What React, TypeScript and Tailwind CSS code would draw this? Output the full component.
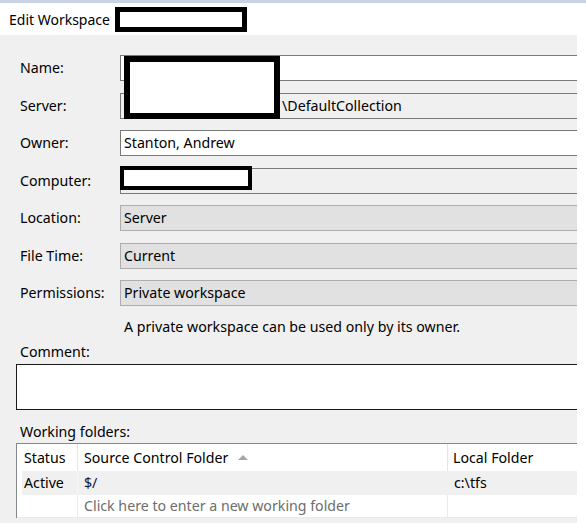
import React from "react";

type Field = {
  label: string;
  value?: string;
  kind: "edit" | "readonly" | "combo";
  pad?: string;
};

const FIELDS: Field[] = [
  { label: "Name:", kind: "edit" },
  { label: "Server:", value: "\\DefaultCollection", kind: "readonly", pad: "pl-[161px]" },
  { label: "Owner:", value: "Stanton, Andrew", kind: "edit" },
  { label: "Computer:", kind: "readonly" },
  { label: "Location:", value: "Server", kind: "combo" },
  { label: "File Time:", value: "Current", kind: "combo" },
  { label: "Permissions:", value: "Private workspace", kind: "combo" },
];

const BOX: Record<Field["kind"], string> = {
  edit: "bg-white border-[#7a7a7a]",
  readonly: "bg-[#f0f0f0] border-[#7a7a7a]",
  combo: "bg-[#e1e1e1] border-[#adadad]",
};

// black-edged boxes that hide names in the screenshot
function Redact({ className }: { className: string }) {
  return <div className={`absolute bg-white border-black ${className}`} />;
}

export default function App() {
  return (
    <div
      className="relative w-[586px] h-[523px] overflow-hidden bg-white text-black text-[14.2px]"
      style={{ fontFamily: '"Segoe UI", "Noto Sans", "Open Sans", sans-serif' }}
    >
      <div className="h-[3px] bg-[#c9d3e3]" />
      <div className="h-[32px] flex items-center pl-[9px] text-[14px]">
        <span>Edit Workspace</span>
        <span className="ml-[5px] inline-block w-[132px] h-[25px] bg-white border-[5px] border-black" />
      </div>

      <div className="w-[577px] h-[488px] bg-[#f0f0f0] overflow-hidden pt-[20px]">
        <div className="flex flex-col gap-[11.5px]">
          {FIELDS.map(f => (
            <div key={f.label} className="flex items-center h-[26px]">
              <div className="w-[120px] pl-[20px] shrink-0 leading-[20px]">{f.label}</div>
              <div
                className={`w-[480px] h-[26px] shrink-0 border flex items-center leading-[20px] ${BOX[f.kind]} ${f.pad ?? "pl-[3px]"}`}
              >
                {f.value}
              </div>
            </div>
          ))}
        </div>

        <div className="mt-[11px] pl-[124px] leading-[20px]">
          A private workspace can be used only by its owner.
        </div>

        <div className="mt-[5px] pl-[20px] leading-[20px]">Comment:</div>
        <div className="ml-[16px] mt-[2px] w-[580px] h-[46px] bg-white border border-[#1a1a1a]" />

        <div className="mt-[12px] pl-[20px] leading-[20px]">Working folders:</div>
        <div className="ml-[16px] mt-[1px] w-[580px] bg-white border-t border-l border-[#828790]">
          <div className="flex h-[27px] items-center">
            <div className="w-[61px] h-full flex items-center pl-[7px] border-r border-[#e5e5e5]">Status</div>
            <div className="w-[370px] h-full flex items-center pl-[6px] border-r border-[#e5e5e5]">
              <span>Source Control Folder</span>
              <svg width="10" height="6" viewBox="0 0 10 6" className="ml-[10px] mt-[-2px]">
                <polygon points="0,6 5,1 10,6" fill="#a6a6a6" />
              </svg>
            </div>
            <div className="flex-1 h-full flex items-center pl-[5px]">Local Folder</div>
          </div>
          <div className="flex h-[24px] items-center pl-[5px]">
            <div className="w-[56px] h-full flex items-center pl-[2px] bg-[#f0f0f0] border-r border-[#f7f7f7]">Active</div>
            <div className="w-[370px] h-full flex items-center pl-[6px] bg-[#f0f0f0] text-[#101838]">$/</div>
            <div className="flex-1 h-full flex items-center pl-[6px] bg-[#f0f0f0]">c:\tfs</div>
          </div>
          <div className="flex h-[23px] items-center border-b border-[#eaeaea]">
            <div className="w-[61px] h-full border-r border-[#eaeaea]" />
            <div className="w-[370px] h-full flex items-center pl-[6px] border-r border-[#eaeaea] text-[#6d6d6d]">
              Click here to enter a new working folder
            </div>
            <div className="flex-1 h-full" />
          </div>
        </div>
      </div>

      <Redact className="left-[124px] top-[56px] w-[156px] h-[63px] border-[6px]" />
      <Redact className="left-[120px] top-[166px] w-[132px] h-[24px] border-[4px]" />
    </div>
  );
}
